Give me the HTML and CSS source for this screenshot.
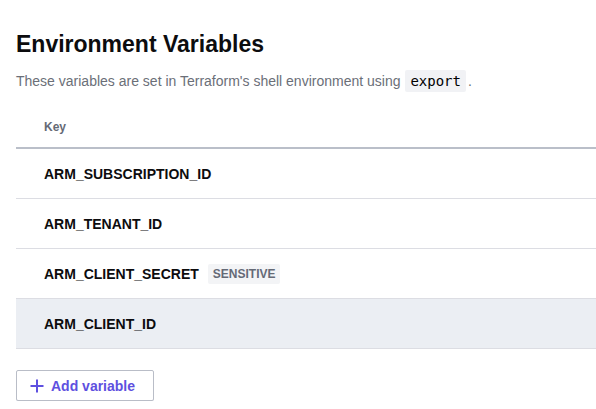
FILE: index.html
```html
<!DOCTYPE html>
<html>
<head>
<meta charset="utf-8">
<link rel="stylesheet" href="styles.css">
</head>
<body>
<div class="page">
  <h1 class="title">Environment Variables</h1>
  <p class="desc">These variables are set in Terraform's shell environment using <code class="code">export</code>.</p>
  <div class="table">
    <div class="thead">Key</div>
    <div class="row"><span class="key">ARM_SUBSCRIPTION_ID</span></div>
    <div class="row"><span class="key">ARM_TENANT_ID</span></div>
    <div class="row"><span class="key">ARM_CLIENT_SECRET</span><span class="badge">SENSITIVE</span></div>
    <div class="row row-hover"><span class="key">ARM_CLIENT_ID</span></div>
  </div>
  <button class="btn">
    <svg class="plus" width="14" height="14" viewBox="0 0 14 14"><path d="M7 0.5V13.5M0.5 7H13.5" stroke="currentColor" stroke-width="2" fill="none"/></svg>
    <span>Add variable</span>
  </button>
</div>
</body>
</html>
```
FILE: styles.css
```css
html, body {
  margin: 0;
  padding: 0;
  background: #fff;
}
body {
  font-family: "Liberation Sans", Arial, sans-serif;
  color: #000;
}
.page {
  padding: 30px 0 0 16px;
}
.title {
  margin: 0;
  font-size: 23px;
  line-height: 28px;
  font-weight: 700;
  color: #0c0c0e;
}
.desc {
  margin: 12px 0 0;
  font-size: 14px;
  line-height: 22px;
  color: #6b6f78;
}
.code {
  display: inline-block;
  font-family: "DejaVu Sans Mono", monospace;
  font-size: 14px;
  line-height: 22px;
  background: #f1f2f5;
  color: #000;
  padding: 0 5px;
  margin: 0 2px 0 1px;
  border-radius: 2px;
}
.table {
  margin-top: 14px;
}
.thead {
  border-bottom: 2px solid #babfc9;
  padding-left: 28px;
  font-size: 12px;
  font-weight: 700;
  color: #656a76;
  display: flex;
  align-items: center;
  box-sizing: border-box;
  height: 43px;
}
.row {
  height: 50px;
  box-sizing: border-box;
  border-bottom: 1px solid #dcdde3;
  display: flex;
  align-items: center;
  padding-left: 28px;
  padding-top: 1px;
}
.row-hover {
  background: #ebeef3;
}
.key {
  font-size: 14px;
  font-weight: 700;
  color: #0c0c0e;
}
.badge {
  margin-left: 9px;
  background: #f3f4f6;
  color: #656a76;
  font-size: 12px;
  font-weight: 700;
  line-height: 20px;
  padding: 0 5px;
  border-radius: 2px;
}
.btn {
  margin-top: 21px;
  display: flex;
  align-items: center;
  gap: 7px;
  width: 138px;
  height: 31px;
  box-sizing: border-box;
  padding: 0 0 0 13px;
  background: #fff;
  border: 1px solid #b9bdc7;
  border-radius: 2px;
  box-shadow: 0 2px 0 #eceef2;
  font-family: "Liberation Sans", Arial, sans-serif;
  font-size: 14px;
  font-weight: 700;
  color: #5e50e0;
}
.plus {
  display: block;
}
```
